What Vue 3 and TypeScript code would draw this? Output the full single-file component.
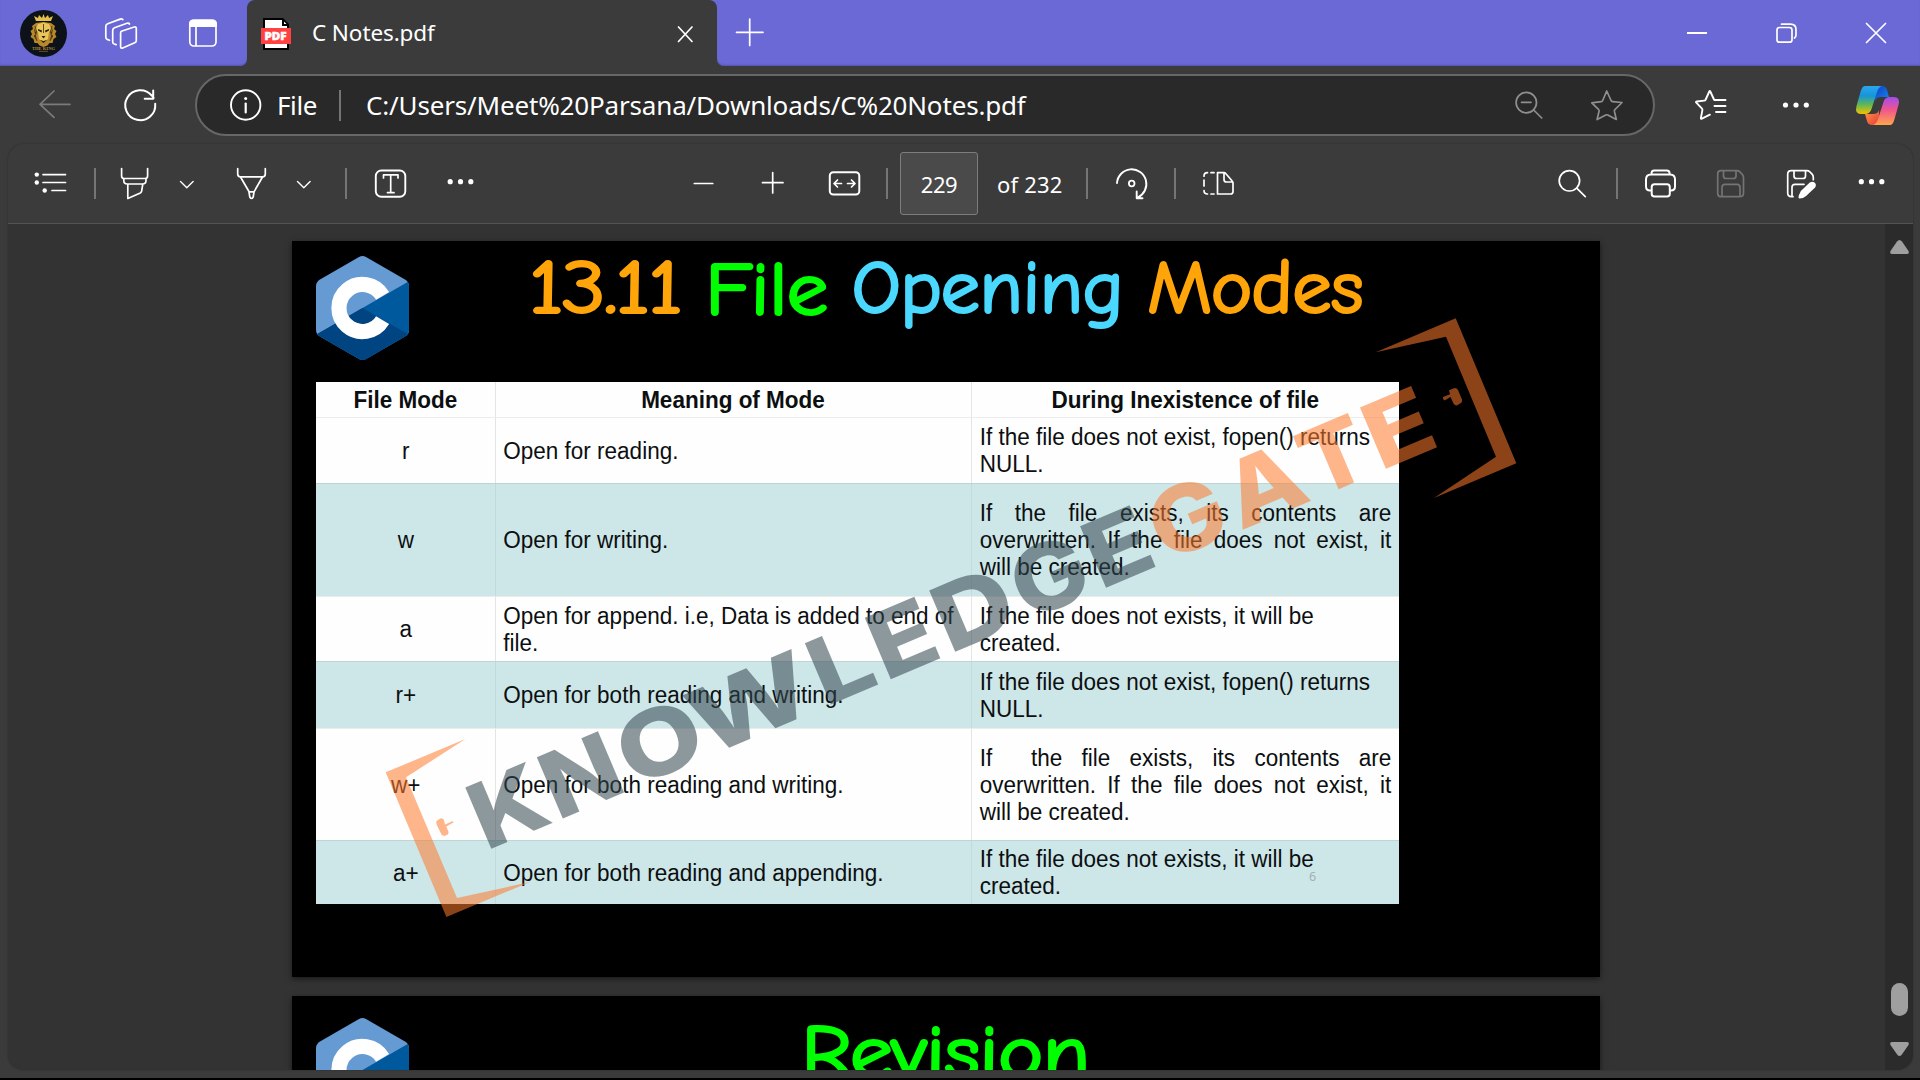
<script setup lang="ts">
interface Row {
  mode: string
  meaning: string[]
  missing: string[]
  justify?: boolean
  height: number
}

const rows: Row[] = [
  { mode: 'r', meaning: ['Open for reading.'], missing: ['If the file does not exist, fopen() returns', 'NULL.'], height: 65.5 },
  { mode: 'w', meaning: ['Open for writing.'], missing: ['If the file exists, its contents are', 'overwritten. If the file does not exist, it', 'will be created.'], justify: true, height: 113 },
  { mode: 'a', meaning: ['Open for append. i.e, Data is added to end of', 'file.'], missing: ['If the file does not exists, it will be', 'created.'], height: 65.5 },
  { mode: 'r+', meaning: ['Open for both reading and writing.'], missing: ['If the file does not exist, fopen() returns', 'NULL.'], height: 66.5 },
  { mode: 'w+', meaning: ['Open for both reading and writing.'], missing: ['If \u00a0the file exists, its contents are', 'overwritten. If the file does not exist, it', 'will be created.'], justify: true, height: 112 },
  { mode: 'a+', meaning: ['Open for both reading and appending.'], missing: ['If the file does not exists, it will be', 'created.'], height: 64.5 },
]

interface Letter {
  c: string
  x: number
  w: number
  gate?: boolean
}

const letters: Letter[] = [
  { c: 'K', x: -7.5, w: 75 },
  { c: 'N', x: 70, w: 78 },
  { c: 'O', x: 152, w: 85 },
  { c: 'W', x: 231, w: 124 },
  { c: 'L', x: 361, w: 61 },
  { c: 'E', x: 426, w: 65 },
  { c: 'D', x: 496, w: 79 },
  { c: 'G', x: 580, w: 76 },
  { c: 'E', x: 660, w: 65 },
  { c: 'G', x: 730, w: 76, gate: true },
  { c: 'A', x: 812, w: 79, gate: true },
  { c: 'T', x: 894, w: 66, gate: true },
  { c: 'E', x: 964, w: 67, gate: true },
]
</script>

<template>
  <div class="window">
    <header class="tabs">
      <div class="tabs-left">
        <svg width="80" height="66" viewBox="0 0 80 66">
          <circle cx="43.5" cy="33.5" r="23.5" fill="#0c1218" />
          <g fill="#c99a32">
            <path d="M36 21l-2-5 4 2 1-3 3 3 1.500-4 1.500 4 3-3 1 3 4-2-2 5z" fill="#e6c04c" />
            <path d="M36 23l-4 3 1 3-2.500 2 1.500 3-1.500 3 3 2 1 4 3 0 2 2.500 4 1.500 4-1.500 2-2.500 3 0 1-4 3-2-1.500-3 1.500-3-2.500-2 1-3-4-3-7.500-1z" fill="#b8892b" />
            <path d="M38 24l5.500-1.500 5.500 1.500 2 5-2 3-1 7-4.500 3-4.500-3-1-7-2-3z" fill="#e9c65a" />
            <path d="M38 29l4 1.500-.5 2-3.500-2zM49 29l-4 1.500.5 2 3.500-2zM41.500 36h4l-2 2.500zM40 40l3.500 1 3.500-1-3.500 3zM34 28l2 5-2 3 2 4M53 28l-2 5 2 3-2 4" fill="#2a2110" />
            <path d="M35 26l1.500 6-1 4 1.500 5M52 26l-1.500 6 1 4-1.500 5M43.500 24v9" fill="none" stroke="#3a2c10" stroke-width=".8" />
          </g>
          <text x="32" y="50" class="crest" textLength="23" lengthAdjust="spacingAndGlyphs">THE KING</text>
          <path d="M39 51.300h9" stroke="#8d6c2c" stroke-width=".7" />
        </svg>
        <svg width="82" height="66" viewBox="80 0 82 66" class="line">
          <path d="M121.400 31.300l12.800-4.300q2.100-.6 2.100 1.500v12q0 1.700-1.600 2.300l-12 5.200q-2.100.8-2.100-1.500v-13.200q0-1.500 .8-2z" />
          <path d="M116.200 44.600l-2-.6q-1.500-.5-1.500-2.300v-11.300q0-2 1.800-2.700l12.500-4.500q1.800-.6 2.500.8" />
          <path d="M109.500 40.300l-2.300-.9q-1.400-.6-1.400-2.400v-10.500q0-2 1.900-2.700l12.500-4.700q1.600-.6 2.600.5" />
        </svg>
        <svg width="85" height="66" viewBox="162 0 85 66">
          <rect x="189.800" y="20.300" width="26.200" height="25.700" rx="4" fill="none" stroke="#fff" stroke-width="1.700" />
          <path d="M189 27v-3q0-4.500 4.500-4.500h19q4.500 0 4.500 4.500v3z" fill="#fff" />
          <path d="M196 27v19" stroke="#fff" stroke-width="1.700" />
        </svg>
      </div>
      <div class="tab-slot">
        <div class="tab">
          <svg width="64" height="66" viewBox="247 0 64 66">
            <path d="M263 18h20l6 6v26h-26z" fill="#000" />
            <path d="M265 20h17v6h5v22h-22z" fill="#fff" />
            <path d="M284 21.500v2.500h2.500z" fill="#fff" />
            <rect x="261" y="28" width="30" height="16" fill="#ff4141" />
            <text x="264.500" y="40.200" class="pdf" textLength="22" lengthAdjust="spacingAndGlyphs">PDF</text>
          </svg>
          <span class="tab-title">C Notes.pdf</span>
          <svg width="57" height="66" viewBox="660 0 57 66" class="line"><path d="M678.500 27l13.500 14.500M692 27l-13.500 14.500" /></svg>
        </div>
      </div>
      <div class="tabs-right">
        <svg width="73" height="66" viewBox="717 0 73 66" class="line"><path d="M736.500 32.300h26.500M749.700 19v26.500" /></svg>
        <div class="grow"></div>
        <svg width="92" height="66" viewBox="1650 0 92 66" class="line"><path d="M1687 33h20" stroke-width="2" stroke-linecap="butt" /></svg>
        <svg width="90" height="66" viewBox="1742 0 90 66" class="line">
          <rect x="1777" y="27.500" width="15" height="14.700" rx="2.500" />
          <path d="M1781.500 24.200h9q5.500 0 5.500 5.500v5.300q0 2-1.500 3" />
        </svg>
        <svg width="88" height="66" viewBox="1832 0 88 66" class="line"><path d="M1866.500 23.500l19 19M1885.500 23.500l-19 19" /></svg>
      </div>
    </header>

    <nav class="address">
      <svg width="95" height="78" viewBox="0 66 95 78" class="line dim"><path d="M70 104.300h-30M54 91l-14 13.300 14 13" /></svg>
      <svg width="100" height="78" viewBox="95 66 100 78" class="line">
        <path d="M155.200 103.800a15 15 0 1 1-3.500-8.300l2 2.500M153.200 90.500v8.300h-8.500" stroke-width="2" />
      </svg>
      <div class="pill">
        <svg width="79" height="58" viewBox="197 76 79 58" class="line">
          <circle cx="245.700" cy="105" r="14.700" stroke-width="1.900" />
          <path d="M245.700 103.500v9" stroke-width="2.200" /><circle cx="245.700" cy="98.500" r="1.500" fill="#fff" stroke="none" />
        </svg>
        <span class="scheme">File</span>
        <i class="sep"></i>
        <span class="url">C:/Users/Meet%20Parsana/Downloads/C%20Notes.pdf</span>
        <svg width="153" height="58" viewBox="1500 76 153 58" class="line gray">
          <circle cx="1526.300" cy="102.600" r="10.200" /><path d="M1533.700 110l8 8M1521.500 102.300h9.500" />
          <path d="M1606.700 91l4.400 9.500q.5 1 1.500 1.100l9.400.9-7 7q-.8.700-.6 1.700l1.900 8.300-8.500-4.500q-1-.5-2 0l-8.700 4.500 2-8.500q.2-1-.6-1.700l-6.700-6.500 9.500-1.200q1-.1 1.400-1.100z" />
        </svg>
      </div>
      <svg width="85" height="78" viewBox="1655 66 85 78" class="line">
        <path d="M1714 99.500l-3.700-8q-.5-1-1 0l-3.600 8q-.5 1-1.500 1.100l-7.500.9q-1.300.3-.4 1.200l5.500 5.600q.8.800.6 1.800l-1.500 7.800q-.2 1.400 1 .8l8-4M1714.500 100h11M1714.500 106h11M1716 112h9.500" stroke-width="1.900" />
      </svg>
      <svg width="100" height="78" viewBox="1740 66 100 78" fill="#fff"><circle cx="1785.500" cy="105" r="2.600" /><circle cx="1796" cy="105" r="2.600" /><circle cx="1806.300" cy="105" r="2.600" /></svg>
      <svg width="80" height="78" viewBox="1840 66 80 78">
        <defs>
          <linearGradient id="cpA" x1="0" y1="0" x2="0" y2="1"><stop offset="0" stop-color="#2ca5ee" /><stop offset=".35" stop-color="#1695d8" /><stop offset=".65" stop-color="#5cb65a" /><stop offset="1" stop-color="#f2c400" /></linearGradient>
          <linearGradient id="cpB" x1="0" y1="0" x2="0" y2="1"><stop offset="0" stop-color="#a04df0" /><stop offset=".45" stop-color="#f0558d" /><stop offset="1" stop-color="#ffa64a" /></linearGradient>
          <linearGradient id="cpC" x1="0" y1="0" x2="1" y2="1"><stop offset="0" stop-color="#0b3fc4" /><stop offset="1" stop-color="#1a86ee" /></linearGradient>
          <linearGradient id="cpD" x1="0" y1="0" x2="1" y2="1"><stop offset="0" stop-color="#ff9a3d" /><stop offset="1" stop-color="#e83b3b" /></linearGradient>
        </defs>
        <path d="M1875 86h7q4 0 5 4l2 7h-8q-5 0-6 4z" fill="url(#cpC)" />
        <path d="M1879 125h-7q-4 0-5-4l-2-7h8q5 0 6-4z" fill="url(#cpD)" />
        <path d="M1865 86h17q-3.500 1-5 6l-5.500 17q-1.500 5-6.500 5h-4q-6.500 0-4.500-8l4-14q1.500-6 4.500-6z" fill="url(#cpA)" />
        <path d="M1890 125h-17q3.500-1 5-6l5.500-17q1.500-5 6.500-5h4q6.500 0 4.500 8l-4 14q-1.500 6-4.500 6z" fill="url(#cpB)" />
      </svg>
    </nav>

    <main class="viewer">
      <div class="tools">
        <svg width="480" height="79" viewBox="8 144 480 79" class="line">
          <path d="M43 174.600h22.500M43 182.500h22.500M52 190.500h13.500" />
          <g fill="#fff" stroke="none"><circle cx="36.800" cy="174.600" r="2.200" /><circle cx="36.800" cy="182.500" r="2.200" /><circle cx="44.700" cy="190.500" r="2.200" /></g>
          <path d="M95 168v31M346 168v31" class="rule" />
          <path d="M121.600 168.500v7.500q0 2.500 2.500 2.500h21q2.500 0 2.500-2.500v-7.500M123.800 178.500v2q0 3.500 3.500 3.500h15.200q3.500 0 3.500-3.500v-2M127.800 184v14.500l12.500-5.500q1-.5 1.300-1.700l1.200-7.300" />
          <path d="M237.700 168.500v5.500q0 2.800 2.800 2.800h22q2.800 0 2.800-2.800v-5.500M240.500 177l8.300 14.300q.3.600 1 .6h3.500q.7 0 1-.6l8.200-14.300M249 192l.8 5q1.700 3 3.400 0l.8-5" />
          <path d="M180.500 181.500l6.300 6.300 6.300-6.300M297.500 181.500l6.300 6.300 6.300-6.300" stroke-width="1.400" />
          <rect x="375.800" y="170.500" width="29.500" height="26.300" rx="5.500" stroke-width="1.900" />
          <path d="M383.500 178v-3.200h14.500v3.200M390.700 174.800v17.700M387.500 192.700h6.500" />
          <g fill="#fff" stroke="none"><circle cx="450.200" cy="181.700" r="2.600" /><circle cx="460.500" cy="181.700" r="2.600" /><circle cx="470.800" cy="181.700" r="2.600" /></g>
        </svg>
        <div class="grow"></div>
        <svg width="220" height="79" viewBox="680 144 220 79" class="line">
          <path d="M694.300 183.500h18.500M762.500 182.700h20.500M772.700 172.500v20.500" />
          <rect x="829.800" y="172.300" width="29.500" height="22.300" rx="3.500" stroke-width="2" />
          <path d="M841.500 183.500h-7.500M837.500 180l-3.500 3.500 3.500 3.500M847.500 183.500h7.500M851.500 180l3.500 3.500-3.500 3.500" />
          <path d="M887 168v31" class="rule" />
        </svg>
        <div class="page-input">229</div>
        <span class="total">of 232</span>
        <svg width="180" height="79" viewBox="1070 144 180 79" class="line">
          <path d="M1087 168v31M1175 168v31" class="rule" />
          <path d="M1117 183a14.700 14.700 0 1 1 20.500 14.500M1136.700 191.500v6.700h5.800" stroke-width="1.900" />
          <circle cx="1131.700" cy="183.500" r="2.800" stroke-width="1.800" />
          <path d="M1217.500 172.700h6.500q1 0 1.700.8l6.500 7.500q.8.800.8 2v8.500q0 2.500-2.500 2.500h-13zM1224 173v6.500q0 2.500 2.500 2.500h6M1207.500 172.700q-3.500 0-3.500 3.500M1211 172.700h3M1204 180v6M1204 190.500q0 3.500 3.500 3.500M1211 194h3" />
        </svg>
        <div class="grow"></div>
        <svg width="373" height="79" viewBox="1540 144 373 79" class="line">
          <circle cx="1569.400" cy="180.800" r="10.200" /><path d="M1576.700 188.200l8.600 8.500" />
          <path d="M1617 168v31" class="rule" />
          <path d="M1651 190.500h-1q-4 0-4-4v-7q0-5 5-5h19q5 0 5 5v7q0 4-4 4h-1M1651.500 174v-.7q0-2.800 2.800-2.800h12.500q2.800 0 2.800 2.800v.7M1654.500 184.300h12.500q2.800 0 2.800 2.800v6.700q0 2.800-2.800 2.800h-12.500q-2.800 0-2.800-2.800v-6.700q0-2.800 2.800-2.800z" stroke-width="2" />
          <g stroke="#747474">
            <path d="M1721 170.700h16q1.500 0 2.600 1l2.600 2.600q1.300 1.300 1.300 3v15.700q0 3.700-3.700 3.700h-18.800q-3.300 0-3.300-3.300v-19.400q0-3.300 3.300-3.300zM1723.500 171v5q0 2.500 2.500 2.500h7.500q2.500 0 2.500-2.500v-5M1722 196v-8.700q0-3 3-3h12q3 0 3 3v8.700" />
          </g>
          <path d="M1793 196.700h-1.700q-3.600 0-3.600-3.600v-18.800q0-3.600 3.600-3.600h15.700q1.500 0 2.600 1l2.500 2.500q1.200 1.300 1.200 3v2.500M1794 171v5q0 2.500 2.500 2.500h6.500q2.500 0 2.500-2.500v-5M1792 196v-8.700q0-3 3-3h9" />
          <path d="M1799.500 198.500q-1.500-.5-.7-3l2-4.500 9-8.500q3-1.700 5 .3t.3 4.700l-9 8.500q-3 2.500-6.600 2.500z" fill="#fff" stroke="none" />
          <g fill="#fff" stroke="none"><circle cx="1861.300" cy="181.700" r="2.600" /><circle cx="1871.500" cy="181.700" r="2.600" /><circle cx="1881.800" cy="181.700" r="2.600" /></g>
        </svg>
      </div>

      <div class="body">
        <div class="pages">
          <section class="page">
            <div class="page-head">
              <svg class="logo" width="93" height="104" viewBox="-46.500 -52 93 104">
                <clipPath id="hex"><path d="M-3.500-51q3.500-2 7 0l39 22.500q4 2.500 4 6.500v44q0 4-4 6.500l-39 22.500q-3.500 2-7 0l-39-22.500q-4-2.500-4-6.500v-44q0-4 4-6.500z" /></clipPath>
                <g clip-path="url(#hex)">
                  <path d="M-47-52h94v104h-94z" fill="#659ad2" />
                  <path d="M-47 27L47-27v80h-94z" fill="#00599c" />
                  <path d="M-47 27L0 0l47 27v26h-94z" fill="#004482" />
                  <path d="M20.100-12.100a23.500 23.500 0 1 0 0 24.200" fill="none" stroke="#fff" stroke-width="15.200" />
                </g>
              </svg>
              <svg class="heading" width="860" height="104" viewBox="520 256 860 104">
                <g stroke="#ffa50a" fill="#ffa50a"><text x="530" y="312" textLength="152" lengthAdjust="spacingAndGlyphs">13.11</text></g>
                <g stroke="#00ff00" fill="#00ff00"><text x="705" y="313.500" textLength="123" lengthAdjust="spacingAndGlyphs">File</text></g>
                <g stroke="#4ad8ff" fill="#4ad8ff"><text x="852" y="312" textLength="271" lengthAdjust="spacingAndGlyphs">Opening</text></g>
                <g stroke="#ffa50a" fill="#ffa50a"><text x="1148" y="312" textLength="215" lengthAdjust="spacingAndGlyphs">Modes</text></g>
              </svg>
            </div>
            <div class="table">
              <div class="tr th"><div><p>File Mode</p></div><div><p>Meaning of Mode</p></div><div><p>During Inexistence of file</p></div></div>
              <div v-for="(row, i) in rows" :key="row.mode" class="tr" :class="{ tint: i % 2 === 1 }" :style="{ height: row.height + 'px' }">
                <div class="mode"><p>{{ row.mode }}</p></div>
                <div><p v-for="l in row.meaning" :key="l">{{ l }}</p></div>
                <div><p v-for="(l, n) in row.missing" :key="l" :class="{ just: row.justify && n < 2 }">{{ l }}</p></div>
              </div>
            </div>
            <span class="slide-no">6</span>
            <svg class="mark" width="1308" height="736" viewBox="292 241 1308 736">
              <g fill="#ff7a2c" opacity=".55">
                <path d="M1375.700 352.300l80-34 60.600 145-82.300 34.700 62-41.300-50-120z" />
                <path d="M385.700 772.300l79.700-33.300-59.400 38.300 51 120.700 73-16-83.600 35z" />
                <path d="M1443 397l7-2.800-1-4 5.500-2.200q2.500 0 3.500 2l4 9.500q.5 3-2 4l-3 2q-2.500 0-3.500-2l-3-6.500-6 3.500q-2-1-1.500-3.500z" />
                <path d="M453 821l-8 3.500-1-4.500q-2-3-4.500-1l-3 2q-.7 2 .3 4l4.700 9.500q1.500 2 4 1l2.500-1.200q1-1.300.3-3l-2-4.800 7-4z" />
              </g>
              <g transform="translate(493 848) rotate(-23)" class="mark-text">
                <text v-for="l in letters" :key="l.x" :x="l.x" y="0" :textLength="l.w" lengthAdjust="spacingAndGlyphs" :class="{ gate: l.gate }">{{ l.c }}</text>
              </g>
            </svg>
          </section>
          <section class="page next">
            <div class="page-head">
              <svg class="logo" width="93" height="104" viewBox="-46.500 -52 93 104">
                <g clip-path="url(#hex)">
                  <path d="M-47-52h94v104h-94z" fill="#659ad2" />
                  <path d="M-47 27L47-27v80h-94z" fill="#00599c" />
                  <path d="M-47 27L0 0l47 27v26h-94z" fill="#004482" />
                  <path d="M20.100-12.100a23.500 23.500 0 1 0 0 24.200" fill="none" stroke="#fff" stroke-width="15.200" />
                </g>
              </svg>
              <svg class="heading" width="860" height="104" viewBox="520 1018 860 104">
                <g stroke="#00ff00" fill="#00ff00"><text x="801" y="1077" textLength="289" lengthAdjust="spacingAndGlyphs">Revision</text></g>
              </svg>
            </div>
          </section>
        </div>
        <div class="scroll">
          <svg width="28" height="848" viewBox="1885 224 28 848" fill="#9f9f9f">
            <path d="M1897 241.500q2.500-3 5 0l6.500 9.500q1 3-1.500 3h-15q-2.500 0-1.500-3z" />
            <rect x="1891" y="983" width="17" height="33" rx="8.500" />
            <path d="M1897.500 1055q2 2 4 0l7-10q1-3-1.500-3h-15q-2.500 0-1.500 3z" />
          </svg>
        </div>
      </div>
    </main>
  </div>
</template>

<style>
body {
  background: #000;
  overflow: hidden;
}
</style>

<style scoped>
.window {
  width: 1920px;
  height: 1078px;
  background: #3b3b3b;
  display: flex;
  flex-direction: column;
  overflow: hidden;
  color: #fff;
  font-family: "Noto Sans", "Open Sans", sans-serif;
}
svg { display: block; flex: none; }
.grow { flex: 1; }
.line { fill: none; stroke: #fff; stroke-width: 1.7; stroke-linecap: round; stroke-linejoin: round; }
.line.dim { stroke: #7b7b7b; }
.line.gray { stroke: #8f8f8f; }
.rule { stroke: #757575; stroke-width: 2; stroke-linecap: butt; }
.tabs { display: flex; height: 66px; flex: none; }
.tabs-left, .tabs-right { display: flex; background: #6b69d6; box-shadow: inset 0 -2px 2px -1px #5553a8; }
.tabs-left { width: 247px; border-bottom-right-radius: 7px; }
.tabs-right { flex: 1; border-bottom-left-radius: 7px; }
.tab-slot { width: 470px; background: linear-gradient(#6b69d6 30px, #3b3b3b 30px); }
.tab { height: 66px; display: flex; align-items: center; background: #3b3b3b; border-radius: 8px 8px 0 0; }
.tab-title { flex: 1; font-size: 22.500px; letter-spacing: -0.1px; margin: 0 -1px 2px 1px; }
.crest { font: bold 4.500px "Liberation Serif", serif; fill: #b98a3c; }
.pdf { font: 800 10.500px "Open Sans", sans-serif; fill: #fff; stroke: #fff; stroke-width: .5; }
.address { display: flex; height: 78px; flex: none; align-items: center; }
.pill { box-sizing: border-box; width: 1460px; height: 62px; border: 2px solid #676767; border-radius: 31px; background: #292929; display: flex; align-items: center; font-size: 26px; }
.scheme { width: 63px; margin-left: 1px; letter-spacing: -0.4px; }
.sep { width: 2px; height: 31px; background: #757575; margin: 0 25px 0 -1px; }
.url { flex: 1; letter-spacing: -0.17px; white-space: nowrap; }
.viewer { box-sizing: border-box; width: 1905px; height: 926px; margin-left: 8px; border-radius: 16px; overflow: hidden; background: #333; box-shadow: 0 0 2px #2a2a2a; display: flex; flex-direction: column; }
.tools { height: 79px; flex: none; display: flex; align-items: center; background: #3b3b3b; border-bottom: 1px solid #545454; }
.tools .grow:first-of-type { flex: 0 0 192px; }
.page-input { box-sizing: border-box; width: 78px; height: 63px; border: 1px solid #7d7d7d; border-radius: 3px; background: #4a4a4a; text-align: center; line-height: 63px; font-size: 22px; letter-spacing: -0.5px; }
.total { width: 73px; margin-left: 19px; font-size: 22px; letter-spacing: 0.2px; white-space: nowrap; }
.body { flex: 1; min-height: 0; display: flex; }
.pages { flex: 1; display: flex; flex-direction: column; gap: 19px; padding: 17px 0 0 284px; overflow: hidden; }
.page { position: relative; width: 1308px; height: 736px; flex: none; background: #000; box-shadow: 0 2px 6px rgba(0, 0, 0, .5); }
.page-head { display: flex; padding: 15px 0 0 24px; }
.next .page-head { padding-top: 22px; }
.heading { margin-left: 111px; overflow: visible; }
.heading text { font: 200 72px "Comic Sans MS", "Comic Neue", "DejaVu Sans Light", "DejaVu Sans", sans-serif; stroke-width: 4px; stroke-linejoin: round; stroke-linecap: round; }
.table { width: 1083px; height: 522px; margin: 22px 0 0 24px; background: #fefefe; color: #0c0f10; font: 22.500px/27px "Liberation Sans", Arial, sans-serif; }
.tr { box-sizing: border-box; display: grid; grid-template-columns: 178.500px 476.500px 428px; border-top: 1.500px solid rgba(0, 0, 0, .07); }
.tr > div { box-sizing: border-box; padding: 0 8px 0 7.500px; display: flex; flex-direction: column; justify-content: center; border-left: 1.500px solid rgba(0, 0, 0, .1); }
.tr > div:first-child { border-left: 0; padding-left: 8.500px; }
.th { height: 35px; border: 0; font-weight: bold; text-align: center; }
.tint { background: #cde6e8; }
.tint > div + div { border-left-color: rgba(0, 0, 0, .05); }
.mode { text-align: center; }
p { margin: 0; white-space: nowrap; transform: translate(.3px, .7px) scaleY(1.07); }
.th p { transform: scaleY(1.07); }
.just { white-space: normal; text-align: justify; text-align-last: justify; }
.slide-no { position: absolute; left: 1017px; top: 627px; font-size: 12.500px; line-height: 17px; color: #9fb2b4; }
.mark { position: absolute; left: 0; top: 0; }
.mark-text { font: 800 91.500px Inter, sans-serif; fill: #32464e; opacity: .55; }
.gate { fill: #ff7a2c; }
.scroll { width: 28px; background: #2b2b2b; overflow: hidden; }
</style>
